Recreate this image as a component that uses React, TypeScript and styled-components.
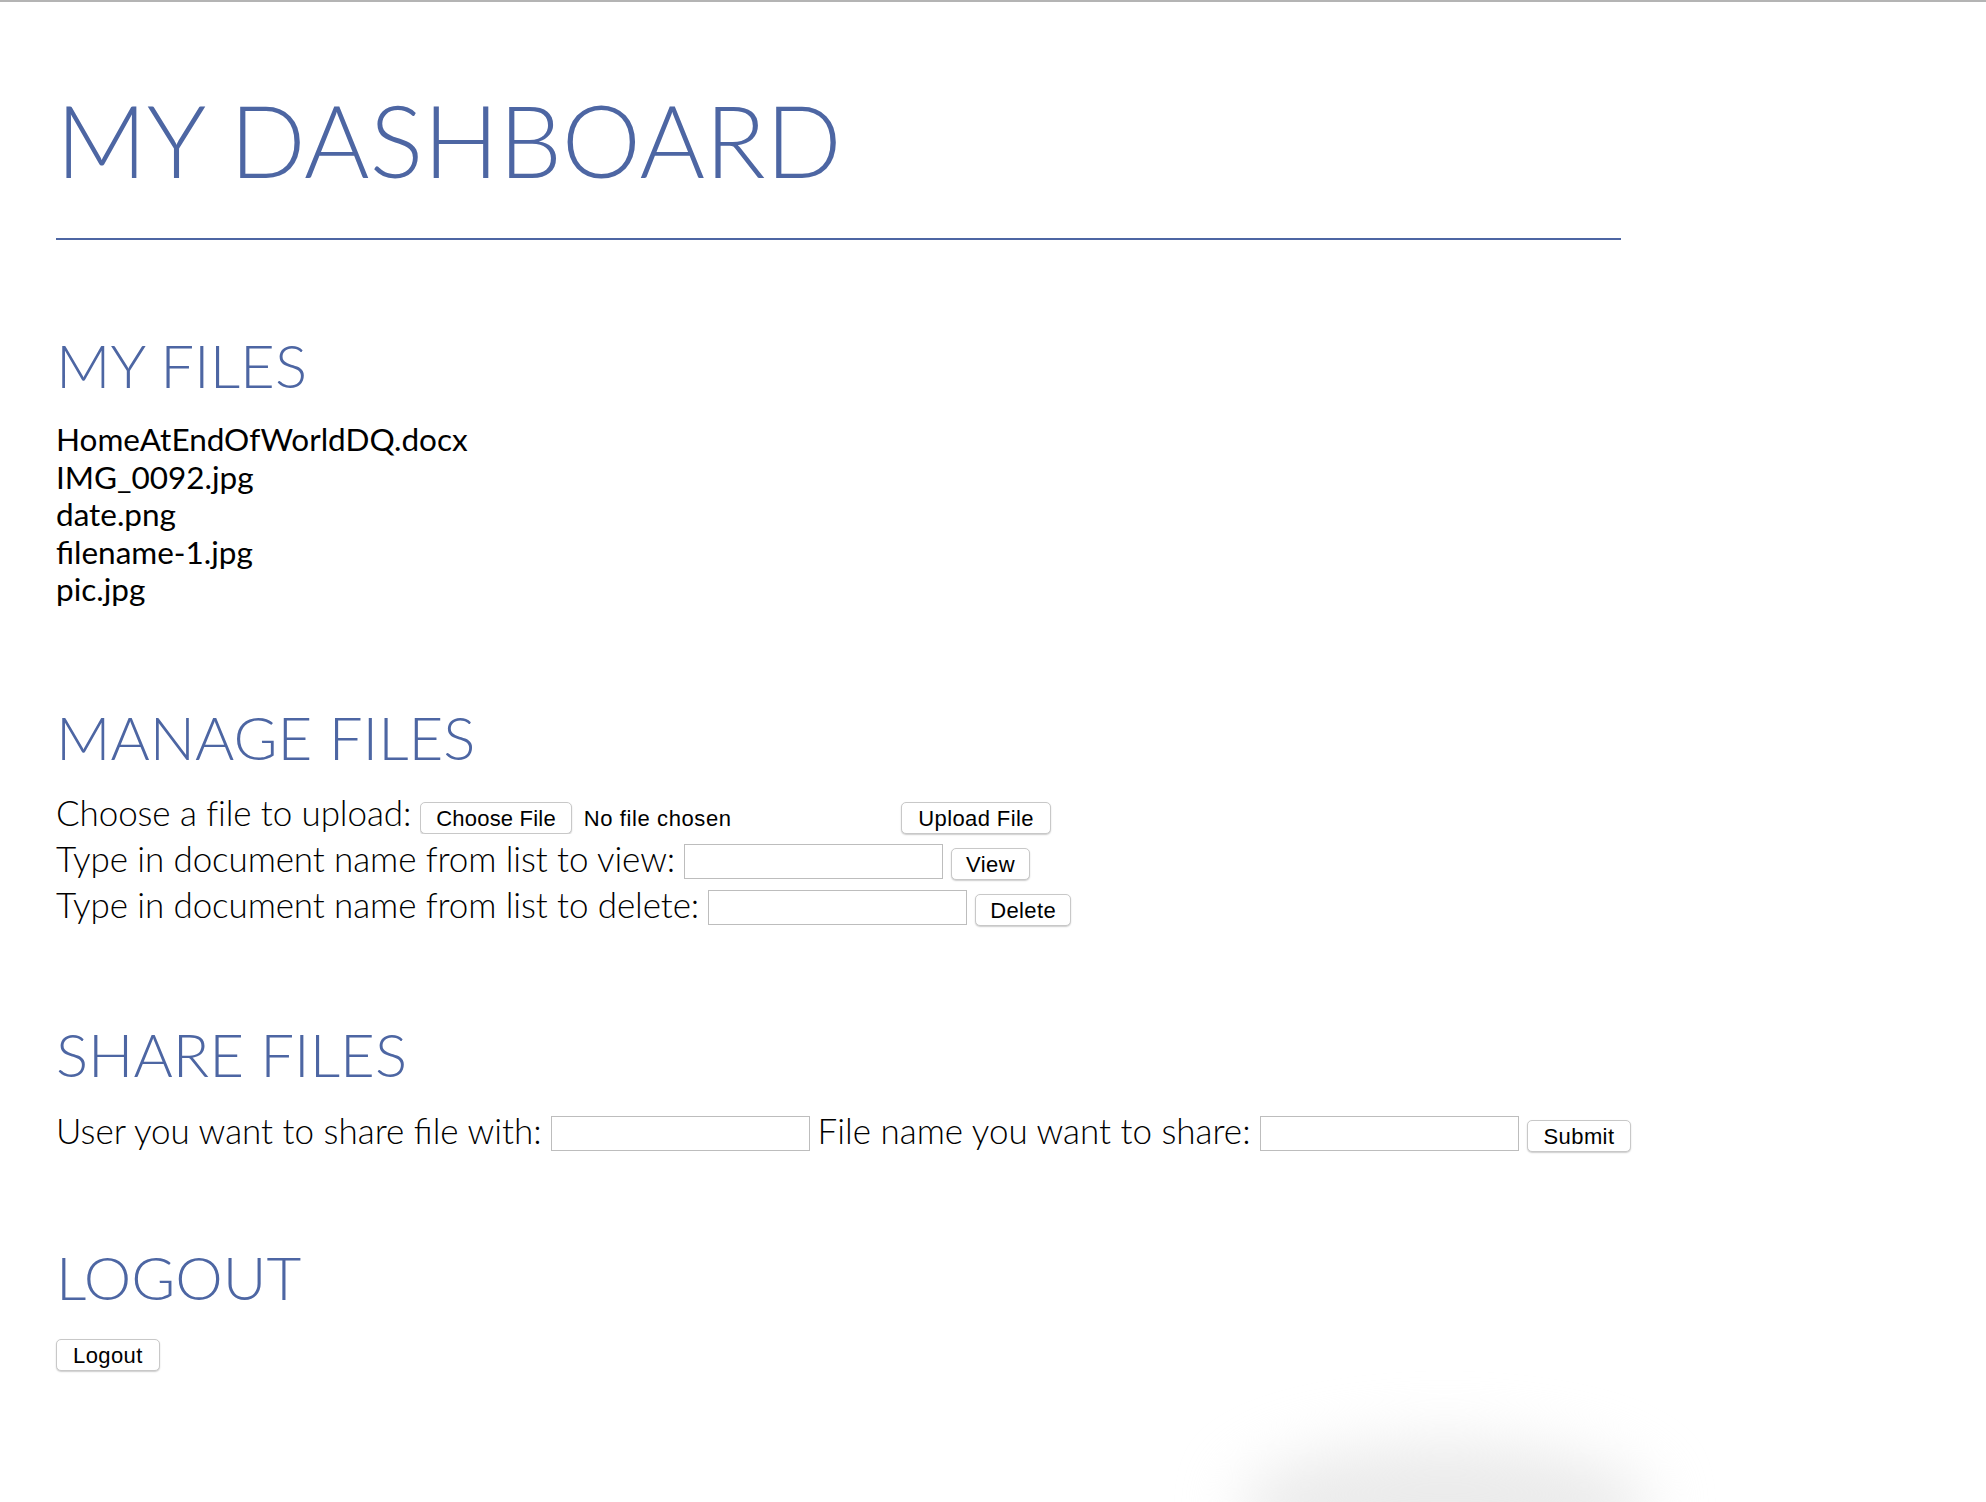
import React from "react";
import styled, { createGlobalStyle } from "styled-components";

const GlobalStyle = createGlobalStyle`
  html, body {
    margin: 0;
    padding: 0;
    background: #ffffff;
  }
  body {
    font-family: Lato, "Open Sans", sans-serif;
    color: #000;
  }
`;

const BLUE = "#4d66a3";

const Page = styled.main`
  border-top: 2px solid #b4b4b4;
  padding: 0 56px 120px;
  min-height: 1400px;
  box-sizing: border-box;
`;

const Title = styled.h1`
  margin: 77px 0 0;
  font-family: Lato, sans-serif;
  font-weight: 300;
  font-size: 100px;
  line-height: 120px;
  color: ${BLUE};
`;

const Rule = styled.hr`
  margin: 39px 0 0;
  width: 1565px;
  height: 2px;
  border: none;
  background: ${BLUE};
`;

const Section = styled.section<{ $top: number }>`
  margin-top: ${(p) => p.$top}px;
`;

const Heading = styled.h2`
  margin: 0;
  font-family: Lato, sans-serif;
  font-weight: 300;
  font-size: 60px;
  line-height: 72px;
  color: ${BLUE};
`;

const FileList = styled.ul`
  list-style: none;
  margin: 20px 0 0;
  padding: 0;
  font-family: Lato, sans-serif;
  font-weight: 400;
  font-size: 31.5px;
  line-height: 37.5px;
  color: #000;
`;

const Rows = styled.div<{ $top: number }>`
  display: flex;
  flex-direction: column;
  margin-top: ${(p) => p.$top}px;
`;

const Row = styled.div`
  display: flex;
  align-items: baseline;
  gap: 8px;
  font-family: Lato, sans-serif;
  font-weight: 300;
  font-size: 35px;
  line-height: 46px;
  color: #000;
`;

const Label = styled.label<{ $tight?: boolean }>`
  white-space: nowrap;
  letter-spacing: ${(p) => (p.$tight ? "-0.1px" : "0")};
`;

const buttonLook = `
  font-family: "Liberation Sans", Arial, Helvetica, sans-serif;
  font-size: 22px;
  letter-spacing: 0.4px;
  line-height: 24px;
  height: 32px;
  box-sizing: border-box;
  background: #ffffff;
  color: #000;
  border: 1px solid #c8c8c8;
  border-radius: 5px;
  box-shadow: 0 1px 1.5px rgba(0, 0, 0, 0.2);
  cursor: pointer;
`;

const Button = styled.button<{ $pad?: number }>`
  ${buttonLook}
  padding: 2px ${(p) => p.$pad ?? 16}px 0;
  margin: 0;
`;

const FileInput = styled.input`
  width: 472px;
  font-family: "Liberation Sans", Arial, Helvetica, sans-serif;
  font-size: 22px;
  letter-spacing: 0.6px;
  line-height: 24px;
  color: #000;
  margin: 0 1px 0 1px;
  padding: 0;
  &::file-selector-button {
    ${buttonLook}
    padding: 2px 15px 0;
    letter-spacing: 0.2px;
    margin: 0 12px 0 0;
  }
`;

const TextInput = styled.input`
  align-self: flex-start;
  margin: 9px 0 0 1px;
  width: 259px;
  height: 35px;
  box-sizing: border-box;
  border: 1px solid #bdbdbd;
  border-radius: 0;
  padding: 0 6px;
  font-family: "Liberation Sans", Arial, sans-serif;
  font-size: 20px;
  background: #fff;
  outline: none;
`;

const LogoutButton = styled(Button)`
  margin-top: 26px;
`;

const DockShadow = styled.div`
  position: fixed;
  left: 1240px;
  bottom: -70px;
  width: 410px;
  height: 130px;
  border-radius: 50%;
  background: #ebebeb;
  filter: blur(30px);
  pointer-events: none;
`;

const files = [
  "HomeAtEndOfWorldDQ.docx",
  "IMG_0092.jpg",
  "date.png",
  "filename-1.jpg",
  "pic.jpg",
];

export default function App() {
  return (
    <>
      <GlobalStyle />
      <Page>
        <Title>MY DASHBOARD</Title>
        <Rule />

        <Section $top={89}>
          <Heading>MY FILES</Heading>
          <FileList>
            {files.map((f) => (
              <li key={f}>{f}</li>
            ))}
          </FileList>
        </Section>

        <Section $top={92}>
          <Heading>MANAGE FILES</Heading>
          <Rows $top={16}>
            <Row>
              <Label $tight>Choose a file to upload:</Label>
              <FileInput type="file" />
              <Button>Upload File</Button>
            </Row>
            <Row>
              <Label $tight>Type in document name from list to view:</Label>
              <TextInput type="text" />
              <Button $pad={14}>View</Button>
            </Row>
            <Row>
              <Label $tight>Type in document name from list to delete:</Label>
              <TextInput type="text" />
              <Button $pad={14}>Delete</Button>
            </Row>
          </Rows>
        </Section>

        <Section $top={91}>
          <Heading>SHARE FILES</Heading>
          <Rows $top={17}>
            <Row>
              <Label>User you want to share file with:</Label>
              <TextInput type="text" />
              <Label>File name you want to share:</Label>
              <TextInput type="text" />
              <Button>Submit</Button>
            </Row>
          </Rows>
        </Section>

        <Section $top={88}>
          <Heading>LOGOUT</Heading>
          <LogoutButton>Logout</LogoutButton>
        </Section>
      </Page>
      <DockShadow />
    </>
  );
}
